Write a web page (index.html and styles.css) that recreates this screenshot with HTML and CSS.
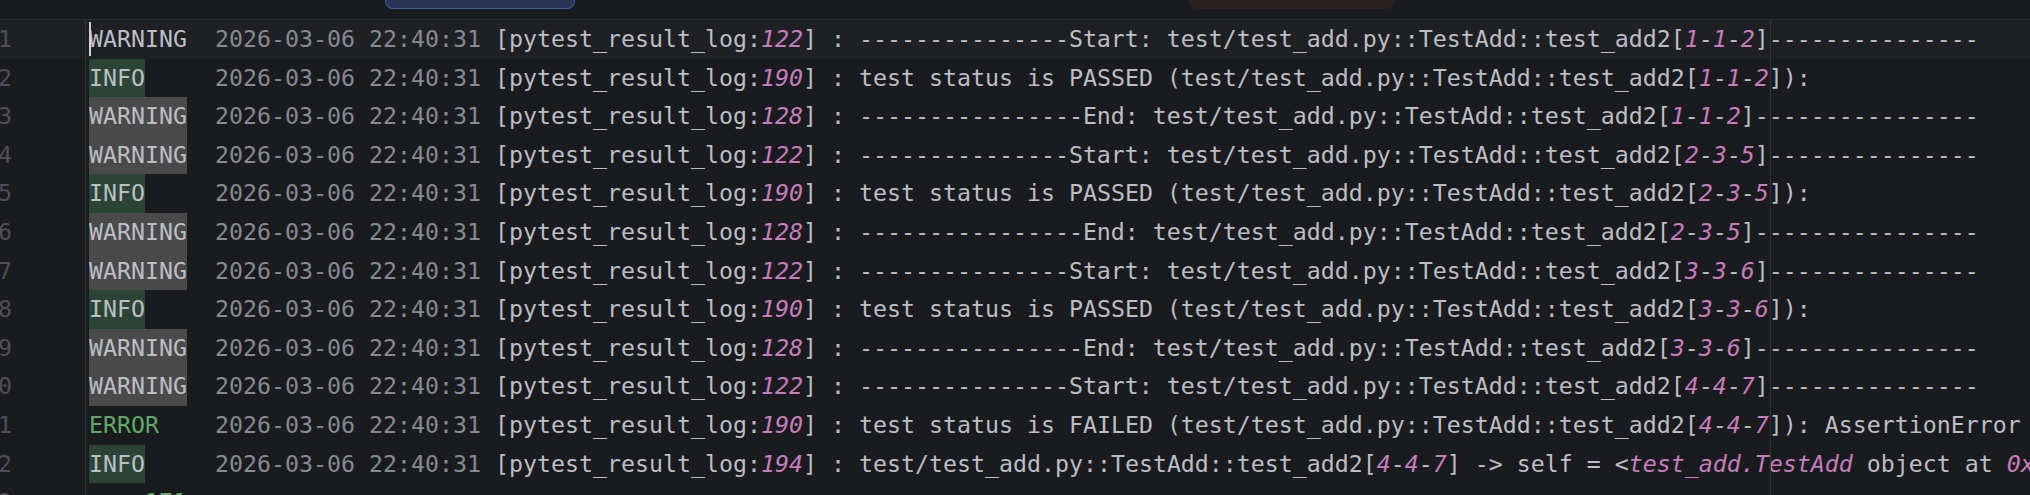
FILE: index.html
```html
<!DOCTYPE html>
<html>
<head>
<meta charset="utf-8">
<link rel="stylesheet" href="styles.css">
</head>
<body>
<div class="topbar">
  <div class="pill blue"></div>
  <div class="pill brown"></div>
</div>
<div class="editor">
  <div class="row cur"><span class="ln">1</span><span class="code"><span class="caret"></span><span class="lvl">WARNING</span>  <span class="d">2026-03-06 22:40:31</span> [pytest_result_log:<span class="n">122</span>] : ---------------Start: test/test_add.py::TestAdd::test_add2[<span class="n">1</span>-<span class="n">1</span>-<span class="n">2</span>]---------------</span></div>
  <div class="row"><span class="ln">2</span><span class="code"><span class="lvl info">INFO</span>     <span class="d">2026-03-06 22:40:31</span> [pytest_result_log:<span class="n">190</span>] : test status is PASSED (test/test_add.py::TestAdd::test_add2[<span class="n">1</span>-<span class="n">1</span>-<span class="n">2</span>]):</span></div>
  <div class="row"><span class="ln">3</span><span class="code"><span class="lvl warn">WARNING</span>  <span class="d">2026-03-06 22:40:31</span> [pytest_result_log:<span class="n">128</span>] : ----------------End: test/test_add.py::TestAdd::test_add2[<span class="n">1</span>-<span class="n">1</span>-<span class="n">2</span>]----------------</span></div>
  <div class="row"><span class="ln">4</span><span class="code"><span class="lvl warn">WARNING</span>  <span class="d">2026-03-06 22:40:31</span> [pytest_result_log:<span class="n">122</span>] : ---------------Start: test/test_add.py::TestAdd::test_add2[<span class="n">2</span>-<span class="n">3</span>-<span class="n">5</span>]---------------</span></div>
  <div class="row"><span class="ln">5</span><span class="code"><span class="lvl info">INFO</span>     <span class="d">2026-03-06 22:40:31</span> [pytest_result_log:<span class="n">190</span>] : test status is PASSED (test/test_add.py::TestAdd::test_add2[<span class="n">2</span>-<span class="n">3</span>-<span class="n">5</span>]):</span></div>
  <div class="row"><span class="ln">6</span><span class="code"><span class="lvl warn">WARNING</span>  <span class="d">2026-03-06 22:40:31</span> [pytest_result_log:<span class="n">128</span>] : ----------------End: test/test_add.py::TestAdd::test_add2[<span class="n">2</span>-<span class="n">3</span>-<span class="n">5</span>]----------------</span></div>
  <div class="row"><span class="ln">7</span><span class="code"><span class="lvl warn">WARNING</span>  <span class="d">2026-03-06 22:40:31</span> [pytest_result_log:<span class="n">122</span>] : ---------------Start: test/test_add.py::TestAdd::test_add2[<span class="n">3</span>-<span class="n">3</span>-<span class="n">6</span>]---------------</span></div>
  <div class="row"><span class="ln">8</span><span class="code"><span class="lvl info">INFO</span>     <span class="d">2026-03-06 22:40:31</span> [pytest_result_log:<span class="n">190</span>] : test status is PASSED (test/test_add.py::TestAdd::test_add2[<span class="n">3</span>-<span class="n">3</span>-<span class="n">6</span>]):</span></div>
  <div class="row"><span class="ln">9</span><span class="code"><span class="lvl warn">WARNING</span>  <span class="d">2026-03-06 22:40:31</span> [pytest_result_log:<span class="n">128</span>] : ----------------End: test/test_add.py::TestAdd::test_add2[<span class="n">3</span>-<span class="n">3</span>-<span class="n">6</span>]----------------</span></div>
  <div class="row"><span class="ln">10</span><span class="code"><span class="lvl warn">WARNING</span>  <span class="d">2026-03-06 22:40:31</span> [pytest_result_log:<span class="n">122</span>] : ---------------Start: test/test_add.py::TestAdd::test_add2[<span class="n">4</span>-<span class="n">4</span>-<span class="n">7</span>]---------------</span></div>
  <div class="row"><span class="ln">11</span><span class="code"><span class="lvl err">ERROR</span>    <span class="d">2026-03-06 22:40:31</span> [pytest_result_log:<span class="n">190</span>] : test status is FAILED (test/test_add.py::TestAdd::test_add2[<span class="n">4</span>-<span class="n">4</span>-<span class="n">7</span>]): AssertionError</span></div>
  <div class="row"><span class="ln">12</span><span class="code"><span class="lvl info">INFO</span>     <span class="d">2026-03-06 22:40:31</span> [pytest_result_log:<span class="n">194</span>] : test/test_add.py::TestAdd::test_add2[<span class="n">4</span>-<span class="n">4</span>-<span class="n">7</span>] -&gt; self = &lt;<span class="n">test_add.TestAdd</span> object at <span class="n">0x000001F2A3B4C5D0</span>&gt;</span></div>
  <div class="row"><span class="ln">13</span><span class="code">    <span class="g">171</span></span></div>
</div>
</body>
</html>
```
FILE: styles.css
```css
html, body {
  margin: 0;
  padding: 0;
  background: #1a1b1e;
  overflow: hidden;
  width: 2030px;
  height: 495px;
}

.topbar {
  height: 19px;
  border-bottom: 1px solid #2b2d30;
  background: #1a1b1e;
  display: flex;
  align-items: flex-start;
  padding-left: 385px;
  box-sizing: content-box;
}

.pill {
  height: 9px;
  border-radius: 0 0 8px 8px;
  box-sizing: border-box;
}

.pill.blue {
  width: 190px;
  background: #263352;
  border: 1.5px solid #3b5b99;
  border-top: none;
}

.pill.brown {
  width: 205px;
  margin-left: 614px;
  background: #2a211e;
}

.editor {
  position: relative;
  font-family: "DejaVu Sans Mono", "Liberation Mono", monospace;
  font-size: 23.25px;
  color: #bcbec4;
}

.editor::after {
  content: "";
  position: absolute;
  left: 1770px;
  top: 0;
  bottom: 0;
  width: 1px;
  background: #303236;
}

.row {
  display: flex;
  height: 38.6px;
  line-height: 38.6px;
  white-space: pre;
}

.row.cur {
  background: #1f2024;
}

.ln {
  flex: 0 0 85px;
  box-sizing: border-box;
  width: 85px;
  display: flex;
  justify-content: flex-start;
  color: #4b5059;
  direction: rtl;
  padding-right: 73px;
  overflow: visible;
}

.code {
  border-left: 1px solid #303236;
  padding-left: 3px;
  flex: 1;
  overflow: hidden;
}

.caret {
  display: inline-block;
  width: 2px;
  height: 34px;
  margin-right: -2px;
  vertical-align: middle;
  background: #ced0d6;
  position: relative;
  top: -2px;
}

.lvl {
  display: inline-block;
  line-height: 38.6px;
  height: 38.6px;
  vertical-align: top;
}

.lvl.warn {
  background: #4a4a4a;
}

.lvl.info {
  background: #2a4535;
}

.lvl.err {
  color: #5fa868;
}

.d {
  color: #868a91;
}

.n {
  color: #c77dbb;
  font-style: italic;
}

.g {
  color: #5fa868;
}
```
